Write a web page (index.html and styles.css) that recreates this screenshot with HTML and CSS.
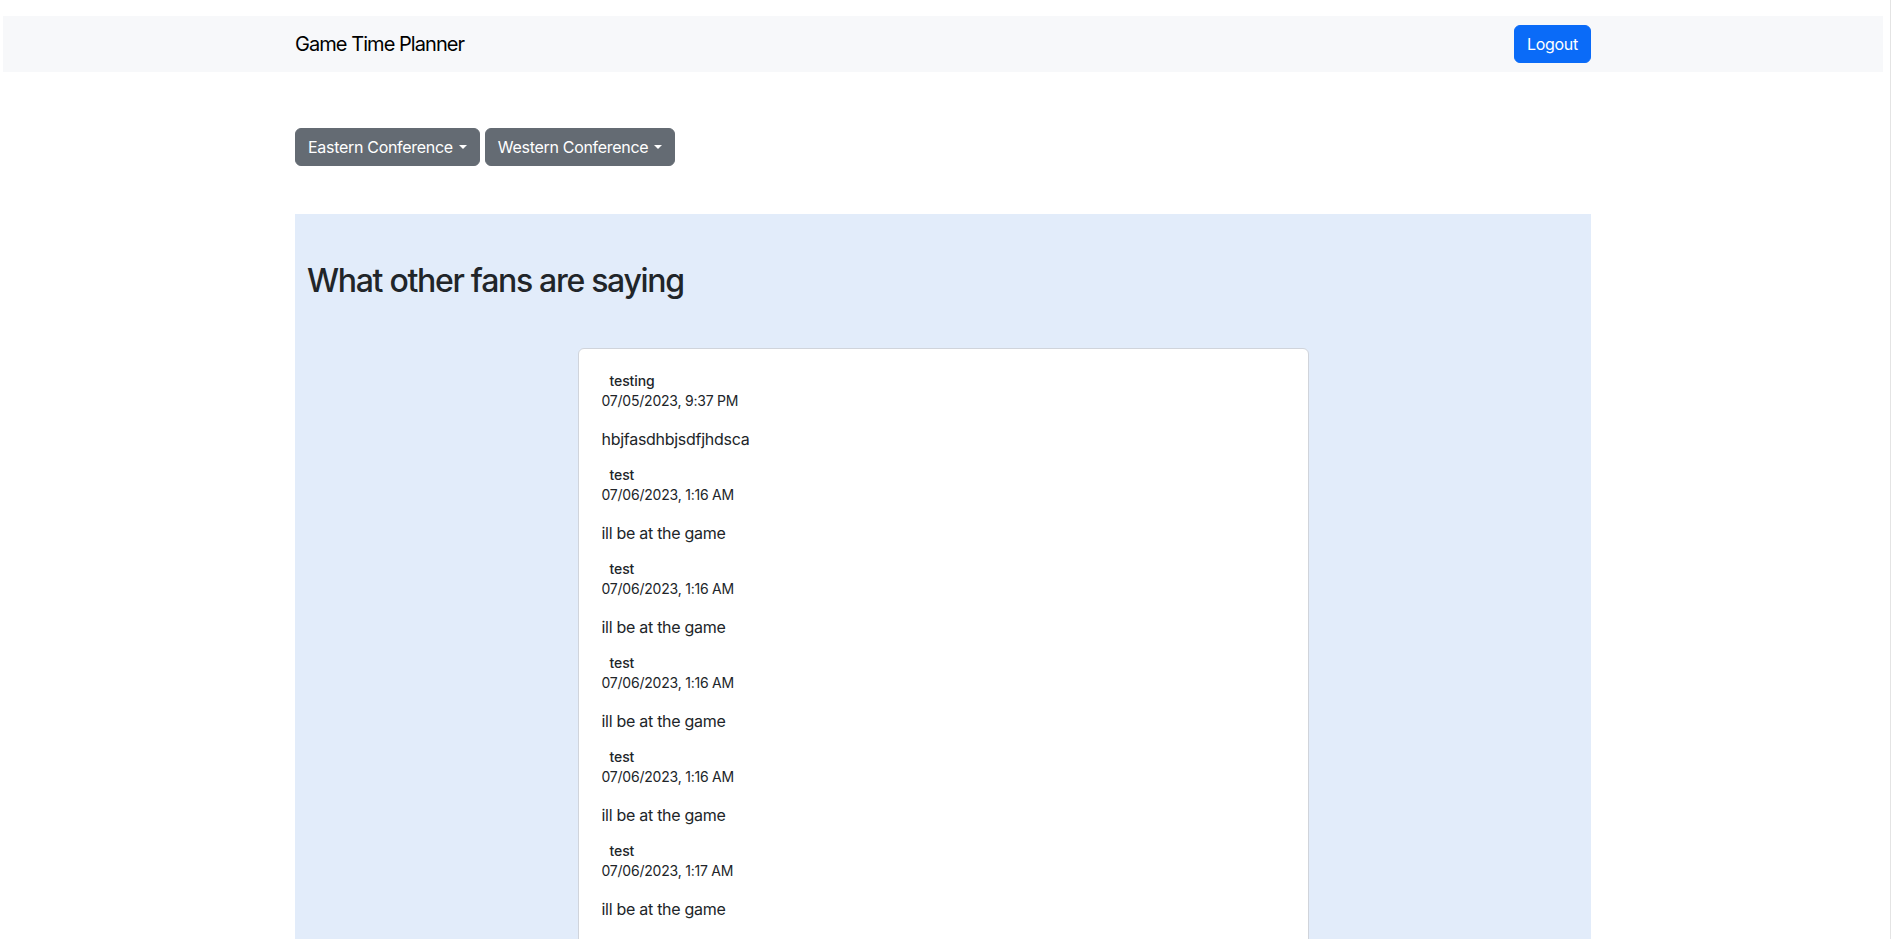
FILE: index.html
```html
<!DOCTYPE html>
<html lang="en">
<head>
<meta charset="utf-8">
<title>Game Time Planner</title>
<link rel="stylesheet" href="styles.css">
</head>
<body>
  <nav class="navbar">
    <div class="container nav-inner">
      <a class="brand" href="#">Game Time Planner</a>
      <button class="btn btn-primary">Logout</button>
    </div>
  </nav>

  <main class="container">
    <div class="conf-row">
      <button class="btn btn-secondary dropdown-toggle">Eastern Conference</button>
      <button class="btn btn-secondary dropdown-toggle">Western Conference</button>
    </div>

    <section class="fans">
      <h2 class="fans-title">What other fans are saying</h2>
      <div class="card">
        <div class="comment">
          <div class="c-user">testing</div>
          <div class="c-date">07/05/2023, 9:37 PM</div>
          <p class="c-msg">hbjfasdhbjsdfjhdsca</p>
        </div>
        <div class="comment">
          <div class="c-user">test</div>
          <div class="c-date">07/06/2023, 1:16 AM</div>
          <p class="c-msg">ill be at the game</p>
        </div>
        <div class="comment">
          <div class="c-user">test</div>
          <div class="c-date">07/06/2023, 1:16 AM</div>
          <p class="c-msg">ill be at the game</p>
        </div>
        <div class="comment">
          <div class="c-user">test</div>
          <div class="c-date">07/06/2023, 1:16 AM</div>
          <p class="c-msg">ill be at the game</p>
        </div>
        <div class="comment">
          <div class="c-user">test</div>
          <div class="c-date">07/06/2023, 1:16 AM</div>
          <p class="c-msg">ill be at the game</p>
        </div>
        <div class="comment">
          <div class="c-user">test</div>
          <div class="c-date">07/06/2023, 1:17 AM</div>
          <p class="c-msg">ill be at the game</p>
        </div>
      </div>
    </section>
  </main>
</body>
</html>
```
FILE: styles.css
```css
* { box-sizing: border-box; }

html { background: #fff; }

body {
  margin: 0;
  width: 1891px;
  min-height: 100vh;
  padding: 16px 7px 0 3px;
  border-right: 1px solid #e4e4e4;
  font-family: Inter, "Noto Sans", Roboto, sans-serif;
  font-size: 16px;
  line-height: 1.5;
  color: #212529;
  background: #fff;
}

.container {
  width: 1296px;
  margin: 0 auto;
}

.navbar {
  background: #f7f8fa;
  padding: 8px 0;
}

.nav-inner {
  display: flex;
  align-items: center;
  justify-content: space-between;
  min-height: 40px;
}

.brand {
  font-size: 20px;
  line-height: 30px;
  color: #000;
  text-decoration: none;
  letter-spacing: -0.95px;
}

.btn {
  display: inline-block;
  font-family: inherit;
  font-size: 16px;
  line-height: 24px;
  padding: 6px 12px;
  border: 1px solid transparent;
  border-radius: 6px;
  color: #fff;
  cursor: pointer;
  letter-spacing: -0.3px;
}

.btn-primary {
  background: #0a6bf8;
  border-color: #0a6bf8;
  width: 77px;
}

.btn-secondary {
  background: #646b73;
  border-color: #646b73;
}

.dropdown-toggle::after {
  content: "";
  display: inline-block;
  margin-left: 6px;
  vertical-align: 0.255em;
  border-top: 0.3em solid;
  border-right: 0.3em solid transparent;
  border-bottom: 0;
  border-left: 0.3em solid transparent;
}

.conf-row {
  display: flex;
  gap: 5px;
  margin-top: 56px;
}

.fans {
  margin-top: 48px;
  background: #e2ecfa;
  padding: 48px 12px 60px;
}

.fans-title {
  margin: 0;
  font-size: 32px;
  font-weight: 500;
  line-height: 1.2;
  letter-spacing: -1.3px;
}

.card {
  width: 731px;
  margin: 48px auto 0;
  background: #fff;
  border: 1px solid #d0d4db;
  border-radius: 6px;
  padding: 22px 23px 20px;
}

.comment {
  display: flex;
  flex-direction: column;
}

.c-user {
  font-size: 14px;
  line-height: 20px;
  font-weight: 500;
  padding-left: 8px;
  letter-spacing: -0.1px;
}

.c-date {
  font-size: 14px;
  line-height: 20px;
  letter-spacing: -0.22px;
}

.c-msg {
  margin: 16px 0 14px;
  font-size: 16px;
  line-height: 24px;
  letter-spacing: -0.28px;
}
```
